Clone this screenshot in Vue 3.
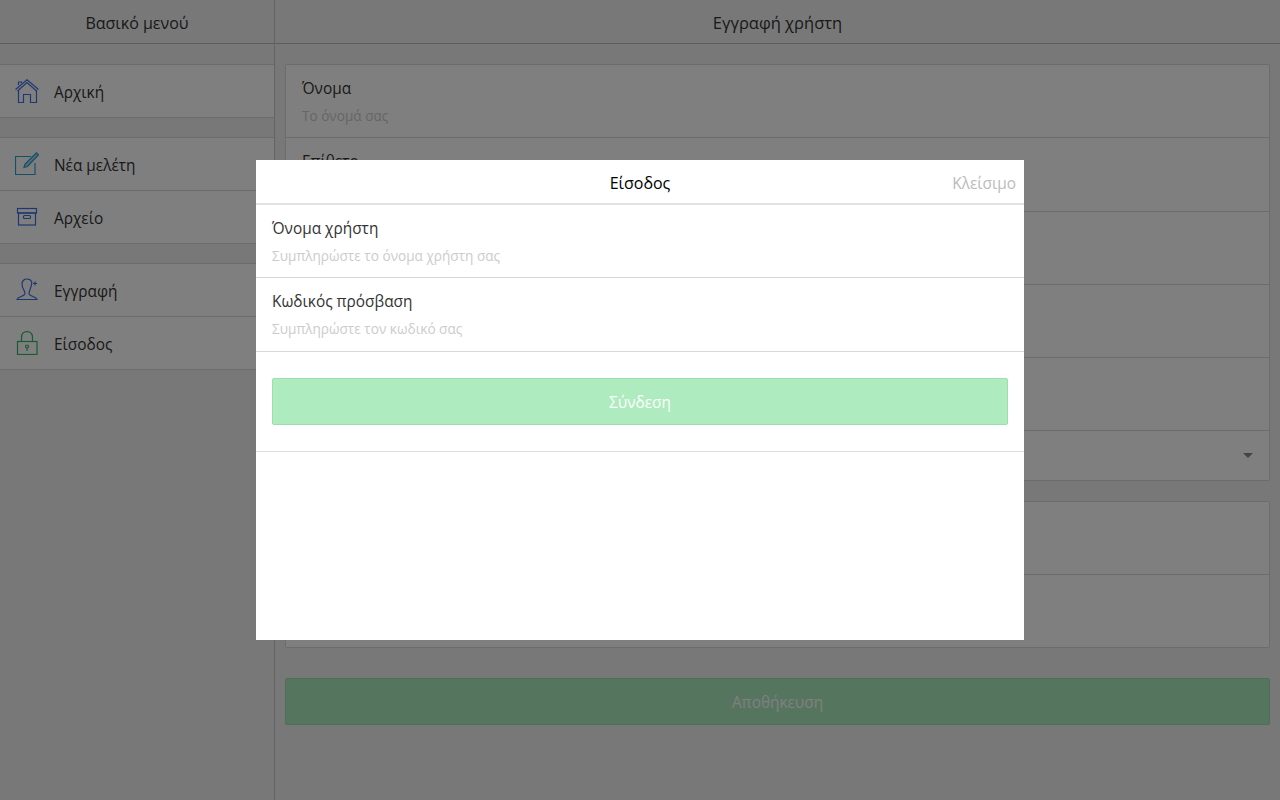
<template>
  <div class="page">
    <aside class="side">
      <div class="bar">Βασικό μενού</div>
      <div v-for="(group, g) in menu" :key="g" class="menu">
        <div v-for="item in group" :key="item.label" class="menuRow">
          <svg v-if="item.icon === 'home'" class="icon" viewBox="0 0 24 24" fill="none" stroke="#3f6ee0" stroke-width="1.2">
            <path d="M0.5 10.5 L12 0.8 L23.5 10.5" />
            <path d="M2.5 12 L12 3.6 L21.5 12" />
            <path d="M3.5 6 V3 H6.5 V4.2" />
            <path d="M3.5 11 V23.5 H8.5 V15.5 H15.5 V23.5 H21.5 V11" />
          </svg>
          <svg v-else-if="item.icon === 'edit'" class="icon" viewBox="0 0 24 24" fill="none" stroke="#28a0d0" stroke-width="1.2">
            <path d="M20 11 V22.5 H0.5 V4.5 H16" />
            <path d="M9 15.5 L10 12 L21.5 0.8 L23.5 2.8 L12.5 14.5 Z" fill="#28a0d0" fill-opacity=".45" />
          </svg>
          <svg v-else-if="item.icon === 'box'" class="icon" viewBox="0 0 24 24" fill="none" stroke="#3f6ee0" stroke-width="1.2">
            <rect x="2.5" y="3.5" width="19" height="4.5" />
            <rect x="3.5" y="8" width="17" height="12" />
            <rect x="8.5" y="10.5" width="7" height="3" rx="1" />
          </svg>
          <svg v-else-if="item.icon === 'user'" class="icon" viewBox="0 0 24 24" fill="none" stroke="#3f6ee0" stroke-width="1.2">
            <path d="M2 21.5 C3 18 9.5 19 10 15.5 C10 12.5 7 10.5 7 6 C7 2.5 9.5 1 12 1 C14.5 1 16 2 16.8 4 C17 9.5 14 12 14 15.5 C14.5 19 21 18 22 21.5 Z" />
            <path d="M20 3.5 V7.5 M18 5.5 H22" />
          </svg>
          <svg v-else class="icon" viewBox="0 0 24 24" fill="none" stroke="#2fb860" stroke-width="1.2">
            <rect x="2.5" y="10.5" width="19.5" height="13" />
            <path d="M6.5 10.5 V6.5 C6.5 2.5 9 0.6 12 0.6 C15 0.6 17.5 2.5 17.5 6.5 V10.5" />
            <circle cx="12" cy="15.5" r="1.5" />
            <path d="M12 17 V20" />
          </svg>
          <span class="menuLabel">{{ item.label }}</span>
        </div>
      </div>
    </aside>

    <main class="main">
      <div class="bar mainBar">Εγγραφή χρήστη</div>
      <div class="content">
        <div class="card">
          <div v-for="(f, i) in personal" :key="i" class="field">
            <div class="label">{{ f.label }}</div>
            <div class="hint">{{ f.hint }}</div>
          </div>
          <div class="selectRow"><i class="caret"></i></div>
        </div>
        <div class="card">
          <div class="field"></div>
          <div class="field"></div>
        </div>
        <button class="btn saveBtn">Αποθήκευση</button>
      </div>
    </main>

    <div class="overlay">
      <div class="modal">
        <div class="modalHead">
          <span class="title">Είσοδος</span>
          <a class="close">Κλείσιμο</a>
        </div>
        <div class="field">
          <div class="label">Όνομα χρήστη</div>
          <div class="hint">Συμπληρώστε το όνομα χρήστη σας</div>
        </div>
        <div class="field">
          <div class="label">Κωδικός πρόσβαση</div>
          <div class="hint">Συμπληρώστε τον κωδικό σας</div>
        </div>
        <div class="modalAction">
          <button class="btn">Σύνδεση</button>
        </div>
      </div>
    </div>
  </div>
</template>

<script setup>
const menu = [
  [{ label: 'Αρχική', icon: 'home' }],
  [{ label: 'Νέα μελέτη', icon: 'edit' }, { label: 'Αρχείο', icon: 'box' }],
  [{ label: 'Εγγραφή', icon: 'user' }, { label: 'Είσοδος', icon: 'lock' }]
]

// the rows further down sit behind the modal, only these two show
const personal = [
  { label: 'Όνομα', hint: 'Το όνομά σας' },
  { label: 'Επίθετο', hint: '' },
  { label: '', hint: '' },
  { label: '', hint: '' },
  { label: '', hint: '' }
]
</script>

<style>
html, body {
  margin: 0;
  height: 100%;
}
</style>

<style scoped>
.page {
  position: relative;
  display: flex;
  height: 800px;
  overflow: hidden;
  background: #f0f0f0;
  color: #333;
  font-family: "Open Sans", "Noto Sans", sans-serif;
  font-size: 15.4px;
}
.side {
  width: 274px;
  flex: none;
  border-right: 1px solid #c8c8c8;
}
.main {
  flex: 1;
  min-width: 0;
}
.bar {
  height: 43px;
  line-height: 47px;
  text-align: center;
  font-size: 16px;
  background: #f0f0f0;
  border-bottom: 1px solid #b8b8b8;
}
.mainBar {
  font-size: 16.5px;
  line-height: 46px;
}
.menu {
  margin-top: 19px;
  background: #fff;
  border-top: 1px solid #d8d8d8;
}
.bar + .menu {
  margin-top: 20px;
}
.menuRow {
  display: flex;
  align-items: center;
  height: 52px;
  padding-left: 15px;
  border-bottom: 1px solid #d8d8d8;
}
.menuLabel {
  padding-top: 2px;
}
.icon {
  width: 24px;
  height: 24px;
  margin-right: 15px;
  flex: none;
}
.content {
  padding: 20px 10px 0 10px;
}
.card {
  background: #fff;
  border: 1px solid #d8d8d8;
  border-radius: 2px;
  margin-bottom: 20px;
}
.field {
  height: 72.3px;
  padding: 0 16px;
  border-bottom: 1px solid #d8d8d8;
  background: #fff;
}
.card .field:last-child {
  height: 71.7px;
  border-bottom: 0;
}
.label {
  padding-top: 13px;
  line-height: 22px;
  min-height: 22px;
  color: #333;
}
.hint {
  margin-top: 6px;
  line-height: 20px;
  font-size: 13.6px;
  color: #ccc;
}
.selectRow {
  position: relative;
  height: 48.5px;
  border-top: 1px solid #d8d8d8;
  margin-top: -1px;
}
.caret {
  position: absolute;
  right: 16px;
  top: 22px;
  border-left: 5px solid transparent;
  border-right: 5px solid transparent;
  border-top: 5px solid #888;
}
.btn {
  display: block;
  width: 100%;
  height: 47px;
  padding-top: 3px;
  background: #aeebbf;
  border: 1px solid #9fdcb0;
  border-radius: 2px;
  color: #fff;
  font-family: inherit;
  font-size: 15.4px;
}
.saveBtn {
  margin-top: 30px;
  background: #aaeabe;
}
.overlay {
  position: absolute;
  inset: 0;
  background: rgba(0, 0, 0, 0.5);
  display: flex;
  align-items: center;
  justify-content: center;
}
.modal {
  width: 768px;
  height: 480px;
  background: #fff;
}
.modalHead {
  position: relative;
  height: 43px;
  line-height: 47px;
  text-align: center;
  font-size: 16px;
  border-bottom: 2px solid #e2e2e2;
}
.title {
  color: #000;
}
.close {
  position: absolute;
  right: 8px;
  top: 0;
  font-size: 15.4px;
  color: #bbb;
}
.modal .field {
  height: 72.4px;
}
.modalAction {
  padding: 26px 16px;
  border-bottom: 1px solid #ddd;
}
</style>
